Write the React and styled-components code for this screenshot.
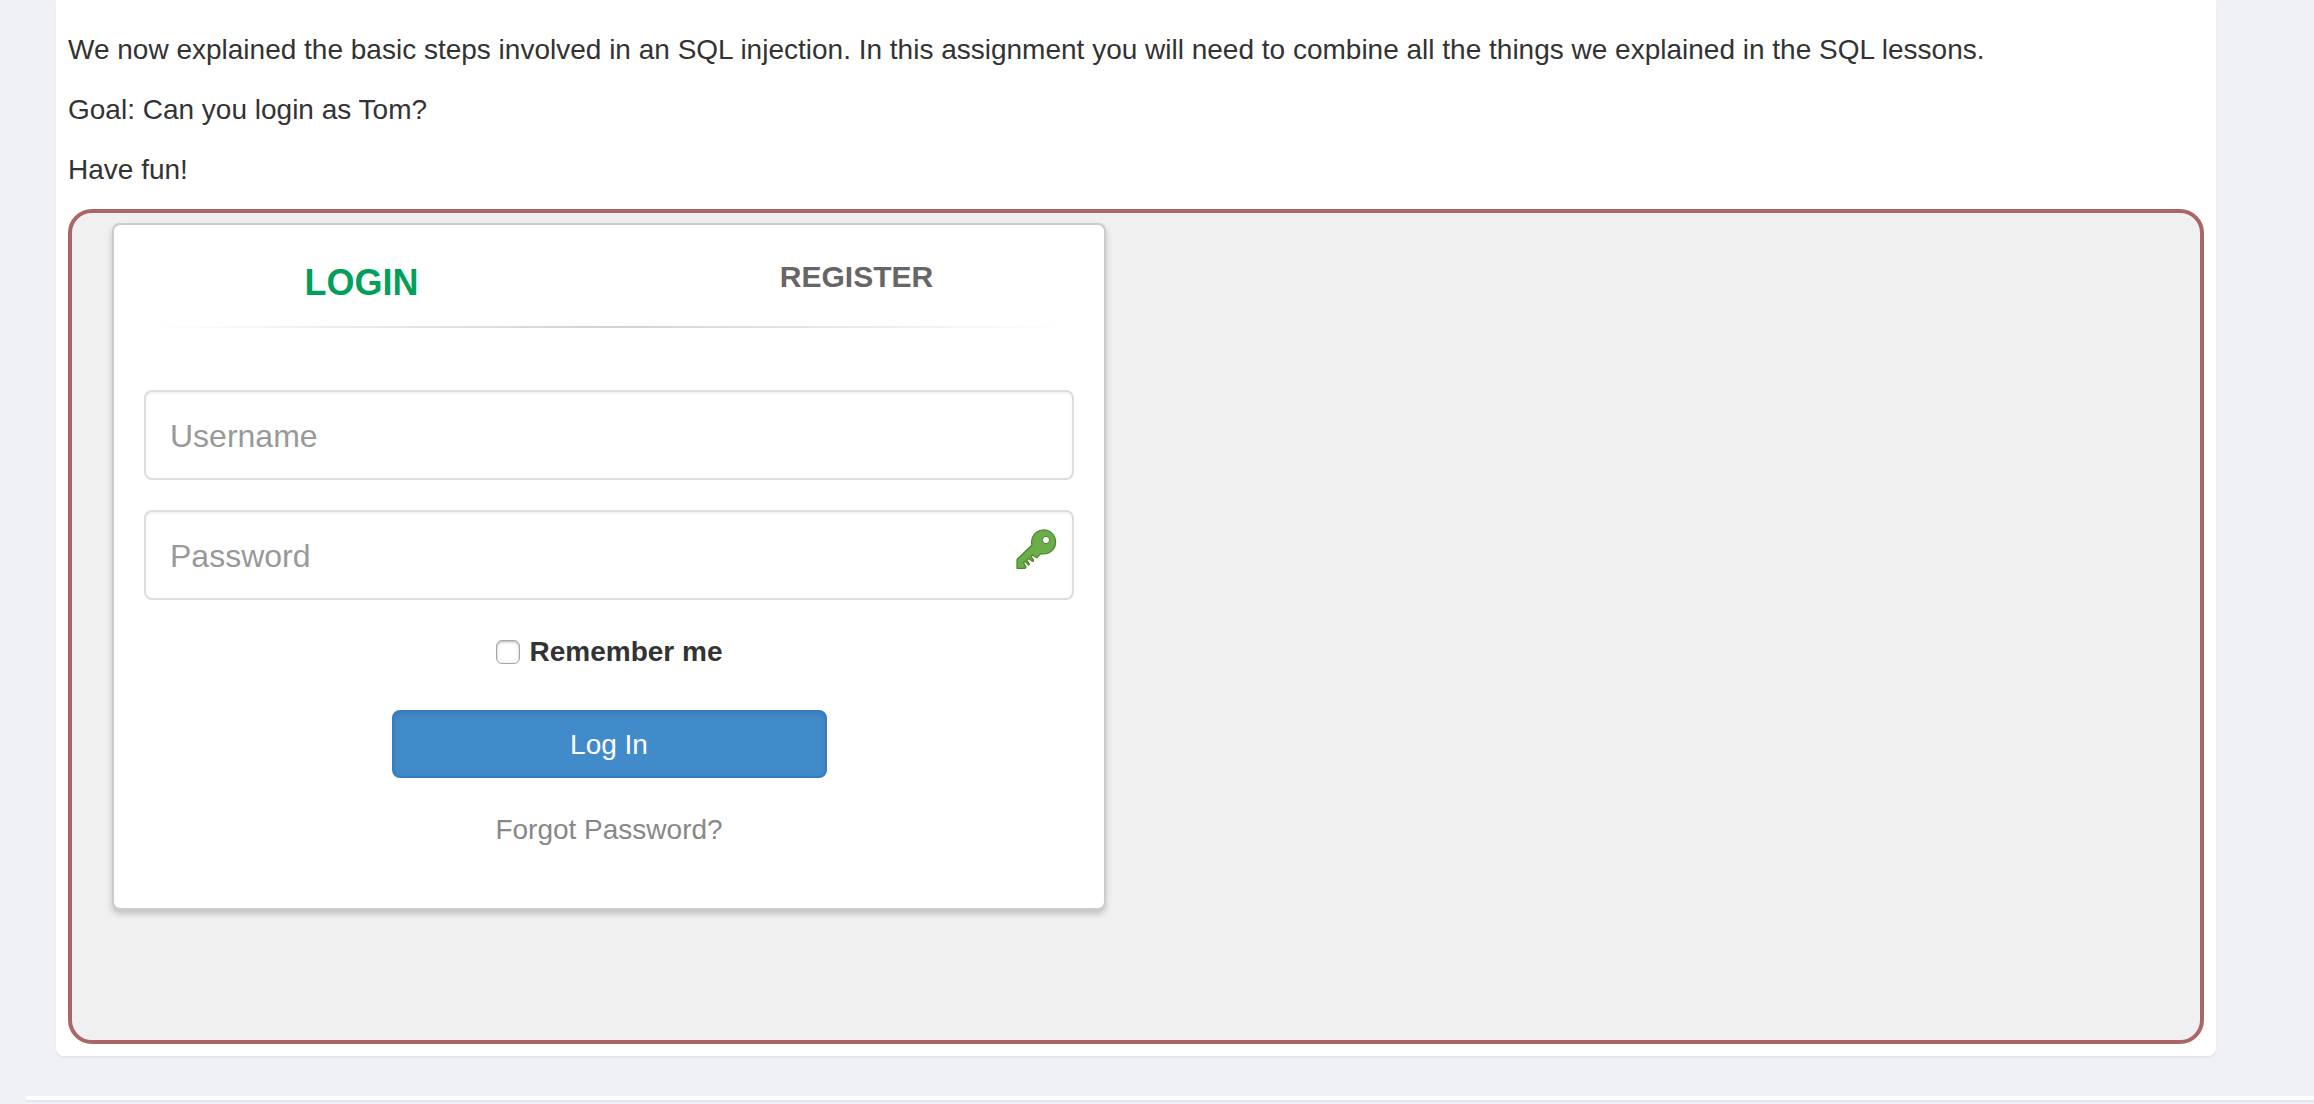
import React from "react";
import styled, { createGlobalStyle } from "styled-components";

const GlobalStyle = createGlobalStyle`
  *, *::before, *::after { box-sizing: border-box; }
  body {
    margin: 0;
    background: #f0f1f7;
    color: #333;
    font: 28px/40px "Helvetica Neue", Helvetica, "Liberation Sans", Arial, sans-serif;
  }
`;

const Page = styled.div`
  overflow: hidden;
`;

const Lesson = styled.main`
  margin: 0 98px 40px 56px;
  padding: 30px 12px 12px;
  background: #fff;
  border-radius: 0 0 8px 8px;
  box-shadow: 0 2px 2px rgba(0, 0, 0, 0.05);
`;

const Intro = styled.div`
  display: flex;
  flex-direction: column;
  gap: 20px;
  padding-bottom: 19px;
`;

const Paragraph = styled.p`
  margin: 0;
`;

const AttackBox = styled.section`
  padding: 10px 40px 130px;
  background: #f0f0f0;
  border: 4px solid #a66;
  border-radius: 24px;
`;

const Card = styled.div`
  width: calc(50% - 30px);
  padding: 32px 30px 58px;
  background: #fff;
  border: 2px solid #ccc;
  border-radius: 8px;
  box-shadow: 0 4px 6px rgba(0, 0, 0, 0.2);
`;

const Tabs = styled.nav`
  display: grid;
  grid-template-columns: 1fr 1fr;
  align-items: start;
  margin: 0 -30px;
  text-align: center;
`;

const Tab = styled.a`
  color: ${(p) => (p.$active ? "#029f5b" : "#666")};
  font-size: ${(p) => (p.$active ? "36px" : "30px")};
  line-height: ${(p) => (p.$active ? "51px" : "40px")};
  font-weight: bold;
  text-decoration: none;
`;

const Divider = styled.hr`
  height: 2px;
  margin: 18px 10px 62px;
  border: 0;
  background: linear-gradient(to right, rgba(0, 0, 0, 0), rgba(0, 0, 0, 0.18), rgba(0, 0, 0, 0));
`;

const Form = styled.form`
  display: flex;
  flex-direction: column;
  align-items: center;
  gap: 30px;
`;

const Field = styled.div`
  position: relative;
  width: 100%;
`;

const TextInput = styled.input`
  display: block;
  width: 100%;
  height: 90px;
  padding: 2px 24px 0;
  color: #555;
  background: #fff;
  border: 2px solid #ddd;
  border-radius: 8px;
  box-shadow: inset 0 2px 2px rgba(0, 0, 0, 0.05);
  font: inherit;
  font-size: 32px;

  &::placeholder { color: #999; opacity: 1; }
`;

const KeyIcon = styled.svg`
  position: absolute;
  top: 19px;
  right: 17px;
  width: 42px;
  height: 42px;
`;

const Remember = styled.label`
  display: flex;
  align-items: center;
  gap: 10px;
  margin: 2px 0 8px;
  font-weight: bold;
`;

const Checkbox = styled.input`
  appearance: none;
  width: 24px;
  height: 24px;
  margin: 0;
  background: #fff;
  border: 1px solid #a6a6a6;
  border-radius: 6px;
  box-shadow: inset 0 1px 3px rgba(0, 0, 0, 0.3);
`;

const Submit = styled.button`
  width: calc(50% - 30px);
  height: 68px;
  padding: 2px 0 0;
  color: #fff;
  background: #428bca;
  border: 2px solid #357ebd;
  border-radius: 8px;
  box-shadow: inset 0 2px 6px rgba(0, 0, 0, 0.1);
  font: inherit;
`;

const ForgotLink = styled.a`
  margin-top: 2px;
  color: #888;
  text-decoration: none;
`;

const NextPanel = styled.footer`
  height: 4px;
  margin: 0 0 4px 26px;
  background: #fff;
  border-radius: 2px 0 0 2px;
  box-shadow: 0 2px 2px rgba(0, 0, 0, 0.05);
`;

export default function App() {
  return (
    <Page>
      <GlobalStyle />
      <Lesson>
        <Intro>
          <Paragraph>
            We now explained the basic steps involved in an SQL injection. In this assignment you
            will need to combine all the things we explained in the SQL lessons.
          </Paragraph>
          <Paragraph>Goal: Can you login as Tom?</Paragraph>
          <Paragraph>Have fun!</Paragraph>
        </Intro>
        <AttackBox>
          <Card>
            <Tabs>
              <Tab href="#login" $active>LOGIN</Tab>
              <Tab href="#register">REGISTER</Tab>
            </Tabs>
            <Divider />
            <Form>
              <Field>
                <TextInput type="text" placeholder="Username" aria-label="Username" />
              </Field>
              <Field>
                <TextInput type="password" placeholder="Password" aria-label="Password" />
                <KeyIcon viewBox="0 0 42 42" aria-hidden="true">
                  <path
                    d="M2 30.5 17 16A12 12 0 1 1 25.7 24.6L21.8 28.8 17.4 26 15.9 27.2 18.5 31.2 18 32.6 13.2 29.4 11.8 31 14.4 35.2 13.6 36.2 10 32.4 8.4 33.6 11 37.8 10 39.3H2Z"
                    fill="#6cad4b"
                    stroke="#4b8426"
                    strokeWidth="1.2"
                    strokeLinejoin="round"
                  />
                  <circle cx="31" cy="11" r="3.6" fill="#fff" stroke="#4b8426" />
                </KeyIcon>
              </Field>
              <Remember>
                <Checkbox type="checkbox" />
                Remember me
              </Remember>
              <Submit type="button">Log In</Submit>
              <ForgotLink href="#forgot">Forgot Password?</ForgotLink>
            </Form>
          </Card>
        </AttackBox>
      </Lesson>
      <NextPanel />
    </Page>
  );
}
